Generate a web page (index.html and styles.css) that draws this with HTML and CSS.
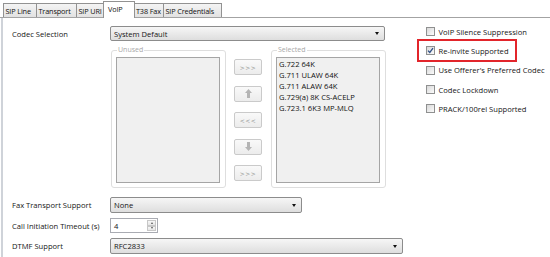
FILE: index.html
```html
<!DOCTYPE html>
<html>
<head>
<meta charset="utf-8">
<link rel="stylesheet" href="styles.css">
</head>
<body>
<div class="tabs">
  <div class="tab t1">SIP Line</div>
  <div class="tab t2">Transport</div>
  <div class="tab t3">SIP URI</div>
  <div class="tab t4 active">VoIP</div>
  <div class="tab t5">T38 Fax</div>
  <div class="tab t6">SIP Credentials</div>
</div>
<div class="panel">
  <div class="left">
    <div class="row codec-row">
      <span class="label">Codec Selection</span>
      <div class="select sel-codec"><span>System Default</span><span class="arrow"></span></div>
    </div>
    <div class="codecs">
      <div class="group">
        <span class="legend">Unused</span>
        <div class="list"></div>
      </div>
      <div class="btns">
        <div class="btn">&gt;&gt;&gt;</div>
        <div class="btn"><svg width="7" height="9" viewBox="0 0 7 9"><path d="M3.5 0 L7 4 L5 4 L5 9 L2 9 L2 4 L0 4 Z" fill="#b4b4b4"/></svg></div>
        <div class="btn">&lt;&lt;&lt;</div>
        <div class="btn"><svg width="7" height="9" viewBox="0 0 7 9"><path d="M3.5 9 L7 5 L5 5 L5 0 L2 0 L2 5 L0 5 Z" fill="#b4b4b4"/></svg></div>
        <div class="btn">&gt;&gt;&gt;</div>
      </div>
      <div class="group">
        <span class="legend">Selected</span>
        <div class="list">
          <div class="item">G.722 64K</div>
          <div class="item">G.711 ULAW 64K</div>
          <div class="item">G.711 ALAW 64K</div>
          <div class="item">G.729(a) 8K CS-ACELP</div>
          <div class="item">G.723.1 6K3 MP-MLQ</div>
        </div>
      </div>
    </div>
    <div class="row fax-row">
      <span class="label">Fax Transport Support</span>
      <div class="select sel-fax"><span>None</span><span class="arrow"></span></div>
    </div>
    <div class="row call-row">
      <span class="label">Call Initiation Timeout (s)</span>
      <div class="spin"><span class="spin-val">4</span>
        <div class="spin-btns">
          <div class="spin-b"><span class="up"></span></div>
          <div class="spin-b"><span class="down"></span></div>
        </div>
      </div>
    </div>
    <div class="row dtmf-row">
      <span class="label">DTMF Support</span>
      <div class="select sel-dtmf"><span>RFC2833</span><span class="arrow"></span></div>
    </div>
  </div>
  <div class="right">
    <div class="check"><span class="box"></span><span>VoIP Silence Suppression</span></div>
    <div class="check highlight"><span class="box"><svg width="7" height="7" viewBox="0 0 7 7"><path d="M1 3.6 L2.8 5.5 L6 1.2" fill="none" stroke="#2f4f86" stroke-width="1.3"/></svg></span><span>Re-invite Supported</span></div>
    <div class="check"><span class="box"></span><span>Use Offerer's Preferred Codec</span></div>
    <div class="check"><span class="box"></span><span>Codec Lockdown</span></div>
    <div class="check"><span class="box"></span><span>PRACK/100rel Supported</span></div>
  </div>
</div>
</body>
</html>
```
FILE: styles.css
```css
html, body {
  margin: 0;
  padding: 0;
}
body {
  width: 550px;
  height: 257px;
  overflow: hidden;
  background: #fff;
  font-family: "Open Sans", "Noto Sans", sans-serif;
  font-size: 7.6px;
  color: #151515;
}
.tabs {
  display: flex;
  align-items: flex-end;
  height: 18px;
  padding-left: 3px;
  border-bottom: 1px solid #a3a3a3;
  box-sizing: border-box;
}
.tab {
  box-sizing: border-box;
  height: 14px;
  border: 1px solid #929292;
  border-bottom: none;
  margin-left: -1px;
  background: linear-gradient(#f4f4f4, #e2e2e2);
  display: flex;
  align-items: center;
  padding-left: 1.5px;
  white-space: nowrap;
  overflow: hidden;
  color: #111;
  font-size: 7.3px;
  letter-spacing: -0.15px;
}
.tab:first-child { margin-left: 0; }
.t1 { width: 34px; }
.t2 { width: 41px; }
.t3 { width: 28px; }
.t4 { width: 32px; }
.t5 { width: 30px; padding-left: 1px; }
.t6 { width: 59px; }
.tab.active {
  height: 17px;
  margin-bottom: -1px;
  background: #fff;
  align-items: flex-start;
  padding-top: 2px;
  padding-left: 4px;
  position: relative;
  z-index: 1;
}
.panel {
  display: flex;
  height: 239px;
  margin-left: 1px;
  border-left: 2px solid #cfd3d9;
}
.left {
  width: 412px;
  padding: 8px 0 0 9px;
  box-sizing: border-box;
}
.row {
  display: flex;
  align-items: center;
}
.label {
  width: 98px;
  flex: none;
  white-space: nowrap;
}
.select {
  box-sizing: border-box;
  display: flex;
  align-items: center;
  justify-content: space-between;
  border: 1px solid #8c8c8c;
  border-radius: 2px;
  background: linear-gradient(#f6f6f6, #dedede);
  padding: 0 5px 0 3px;
}
.arrow {
  width: 0;
  height: 0;
  border-left: 2.5px solid transparent;
  border-right: 2.5px solid transparent;
  border-top: 3px solid #111;
}
.sel-codec { width: 275px; height: 15px; }
.codecs {
  display: flex;
  margin: 9px 0 0 99px;
}
.group {
  position: relative;
  box-sizing: border-box;
  width: 115px;
  height: 138px;
  border: 1px solid #dedede;
  border-radius: 3px;
  padding: 6px 5px 4px 4px;
  display: flex;
}
.legend {
  position: absolute;
  top: -6px;
  left: 5px;
  padding: 0 1px;
  background: #fff;
  color: #a8a8a8;
  font-size: 7px;
}
.list {
  flex: 1;
  border: 1px solid #a5a5a5;
  background: #f0f0f0;
  padding: 1px 2px;
}
.item {
  line-height: 11px;
  white-space: nowrap;
  color: #111;
}
.btns {
  display: flex;
  flex-direction: column;
  gap: 10.5px;
  padding-top: 9px;
  margin: 0 9px 0 8px;
}
.btn {
  box-sizing: border-box;
  width: 28px;
  height: 16px;
  border: 1px solid #cacaca;
  border-radius: 2px;
  background: linear-gradient(#f9f9f9, #ececec);
  color: #8f8f8f;
  font-family: "DejaVu Sans", sans-serif;
  font-size: 6px;
  letter-spacing: 0.5px;
  display: flex;
  align-items: center;
  justify-content: center;
}
.btn svg { display: block; }
.fax-row { margin-top: 9px; height: 16px; }
.sel-fax { width: 192px; height: 16px; }
.call-row { margin-top: 5px; height: 15px; }
.spin {
  box-sizing: border-box;
  width: 48px;
  height: 15px;
  border: 1px solid #a9abb2;
  background: #fff;
  display: flex;
  align-items: center;
  justify-content: space-between;
  padding: 1px 1px 1px 3px;
}
.spin-btns {
  display: flex;
  flex-direction: column;
  width: 9px;
  height: 100%;
}
.spin-b {
  flex: 1;
  border: 1px solid #c7c7c7;
  background: linear-gradient(#f7f7f7, #e6e6e6);
  display: flex;
  align-items: center;
  justify-content: center;
}
.up, .down {
  width: 0;
  height: 0;
  border-left: 1.5px solid transparent;
  border-right: 1.5px solid transparent;
}
.up { border-bottom: 2px solid #555; }
.down { border-top: 2px solid #555; }
.dtmf-row { margin-top: 5px; height: 16px; }
.sel-dtmf { width: 293px; height: 16px; }
.right {
  display: flex;
  flex-direction: column;
  padding-top: 4px;
}
.check {
  position: relative;
  height: 19.3px;
  display: flex;
  align-items: center;
  padding-left: 11px;
  gap: 3.5px;
  white-space: nowrap;
}
.box {
  box-sizing: border-box;
  width: 9px;
  height: 9px;
  border: 1px solid #8f9090;
  background: linear-gradient(135deg, #d8d8d8, #fbfbfb);
  display: flex;
  align-items: center;
  justify-content: center;
}
.box svg { display: block; }
.highlight::after {
  content: "";
  position: absolute;
  left: 2px;
  top: -2px;
  width: 100px;
  height: 22.5px;
  box-sizing: border-box;
  border: 2px solid #e2252b;
}
```
